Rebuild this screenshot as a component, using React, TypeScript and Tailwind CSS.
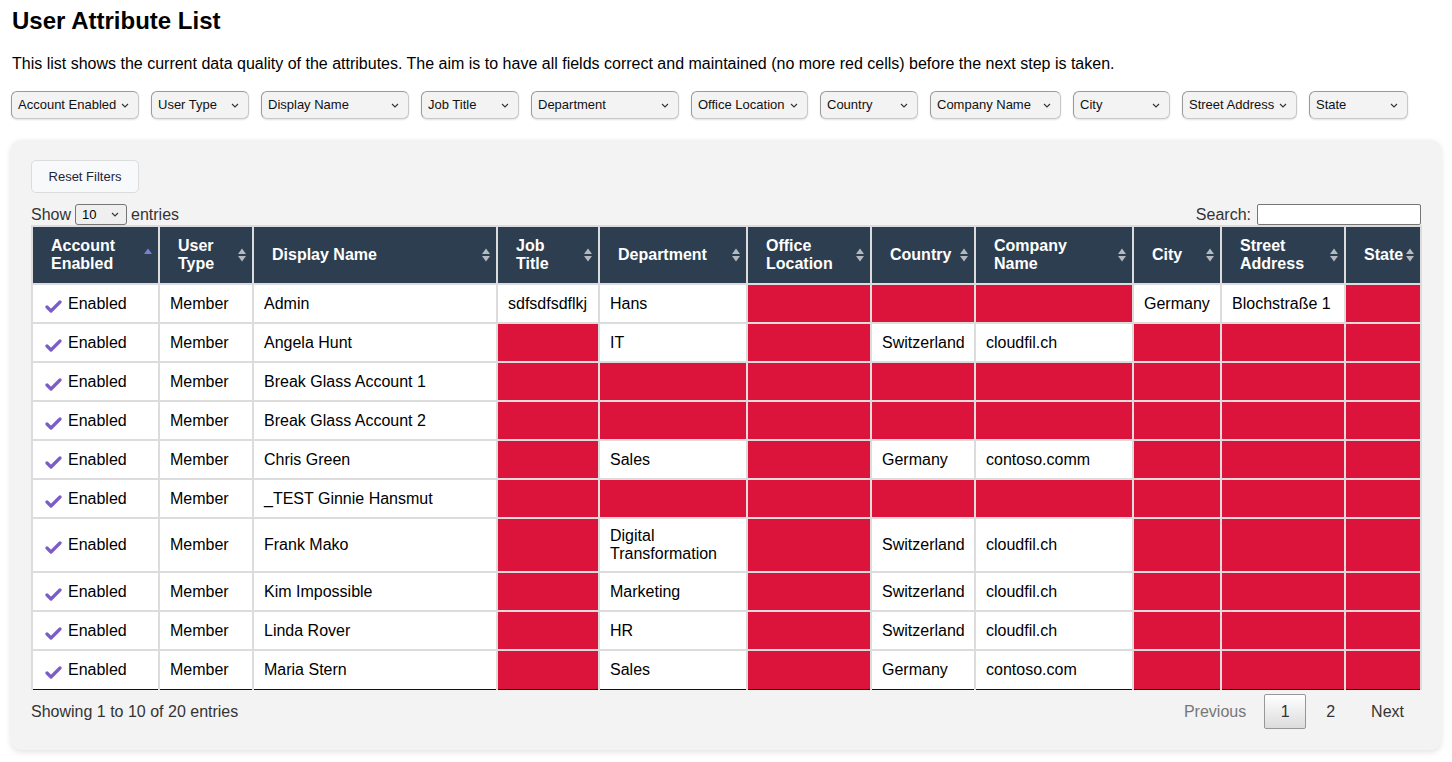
import React from "react";

const font = { fontFamily: '"Liberation Sans", Arial, sans-serif' };

const filters = [
    { label: "Account Enabled", w: "w-[128px]" },
    { label: "User Type", w: "w-[98px]" },
    { label: "Display Name", w: "w-[148px]" },
    { label: "Job Title", w: "w-[98px]" },
    { label: "Department", w: "w-[148px]" },
    { label: "Office Location", w: "w-[117px]" },
    { label: "Country", w: "w-[98px]" },
    { label: "Company Name", w: "w-[131px]" },
    { label: "City", w: "w-[97px]" },
    { label: "Street Address", w: "w-[115px]" },
    { label: "State", w: "w-[99px]" },
];

const columns = [
    { label: "Account Enabled", w: 127 },
    { label: "User Type", w: 94 },
    { label: "Display Name", w: 244 },
    { label: "Job Title", w: 102 },
    { label: "Department", w: 148 },
    { label: "Office Location", w: 124 },
    { label: "Country", w: 104 },
    { label: "Company Name", w: 158 },
    { label: "City", w: 88 },
    { label: "Street Address", w: 124 },
    { label: "State", w: 76 },
];

// null = missing value -> red cell
type Row = (string | null)[];
const rows: Row[] = [
    ["Admin", "sdfsdfsdflkj", "Hans", null, null, null, "Germany", "Blochstraße 1", null],
    ["Angela Hunt", null, "IT", null, "Switzerland", "cloudfil.ch", null, null, null],
    ["Break Glass Account 1", null, null, null, null, null, null, null, null],
    ["Break Glass Account 2", null, null, null, null, null, null, null, null],
    ["Chris Green", null, "Sales", null, "Germany", "contoso.comm", null, null, null],
    ["_TEST Ginnie Hansmut", null, null, null, null, null, null, null, null],
    ["Frank Mako", null, "Digital Transformation", null, "Switzerland", "cloudfil.ch", null, null, null],
    ["Kim Impossible", null, "Marketing", null, "Switzerland", "cloudfil.ch", null, null, null],
    ["Linda Rover", null, "HR", null, "Switzerland", "cloudfil.ch", null, null, null],
    ["Maria Stern", null, "Sales", null, "Germany", "contoso.com", null, null, null],
];

function Chevron() {
    return (
        <svg width="8" height="5" viewBox="0 0 8 5" className="shrink-0">
            <polyline points="1,1 4,4 7,1" fill="none" stroke="#333" strokeWidth="1.1" />
        </svg>
    );
}

function SortIcon({ active }: { active?: boolean }) {
    return (
        <svg width="10" height="16" viewBox="0 0 10 16" className="absolute right-[5px] top-1/2 -translate-y-1/2">
            {active ? (
                <polygon points="1,7 5,1.5 9,7" fill="#7b7fd8" />
            ) : (
                <>
                    <polygon points="1,7 5,1.5 9,7" fill="#b4b9c0" />
                    <polygon points="1,9 5,14.5 9,9" fill="#b4b9c0" />
                </>
            )}
        </svg>
    );
}

function CheckIcon() {
    return (
        <svg width="17" height="13" viewBox="0 0 17 13" className="shrink-0 mt-[5px]">
            <polyline
                points="2,7 6,11 15,2"
                fill="none"
                stroke="#7c5cc6"
                strokeWidth="3.2"
                strokeLinecap="round"
                strokeLinejoin="round"
            />
        </svg>
    );
}

export default function App() {
    const last = rows.length - 1;
    return (
        <div className="min-h-screen bg-white px-[11px] pt-[7px] text-black" style={font}>
            <h1 className="text-[24px] leading-[28px] font-bold pl-[1px]">User Attribute List</h1>
            <p className="mt-[20px] text-[16px] leading-[18px] pl-[1px]">
                This list shows the current data quality of the attributes. The aim is to have all fields correct and maintained (no more red cells) before the next step is taken.
            </p>

            {/* filter dropdowns */}
            <div className="mt-[18px] flex gap-[12px]">
                {filters.map((f) => (
                    <div
                        key={f.label}
                        className={`${f.w} shrink-0 h-[28px] flex items-center justify-between pl-[6px] pr-[9px] rounded-[6px] border border-[#9a9a9a] border-r-[#c8c8c8] border-b-[#c8c8c8] bg-[#f3f3f3] shadow-[0_1px_2px_rgba(0,0,0,0.12)] text-[13px] text-[#111]`}
                    >
                        <span className="whitespace-nowrap">{f.label}</span>
                        <Chevron />
                    </div>
                ))}
            </div>

            <div className="mt-[21px] w-[1430px] rounded-[10px] bg-[#f3f3f3] px-[20px] pt-[20px] pb-[18px] shadow-[0_2px_6px_rgba(0,0,0,0.12)]">
                <button className="h-[33px] w-[108px] rounded-[5px] border border-[#dcdcdc] bg-[#f8f9fb] text-[13px] text-[#1c2636]">
                    Reset Filters
                </button>

                <div className="mt-[11px] h-[21px] flex items-center justify-between text-[16px] text-[#333]">
                    <div className="flex items-center">
                        <span>Show</span>
                        <div className="mx-[4px] h-[21px] w-[52px] flex items-center justify-between pl-[6px] pr-[7px] rounded-[3px] border border-[#767676] bg-[#efefef] text-[13px] text-black">
                            <span>10</span>
                            <Chevron />
                        </div>
                        <span>entries</span>
                    </div>
                    <div className="flex items-center gap-[6px]">
                        <span>Search:</span>
                        <div className="h-[21px] w-[164px] rounded-[2px] border border-[#767676] bg-white" />
                    </div>
                </div>

                <table className="w-[1390px] table-fixed border-collapse text-[16px]">
                    <colgroup>
                        {columns.map((c) => (
                            <col key={c.label} style={{ width: c.w }} />
                        ))}
                    </colgroup>
                    <thead>
                        <tr className="bg-[#2d3e50] text-white">
                            {columns.map((c, i) => (
                                <th
                                    key={c.label}
                                    className="relative border-2 border-[#dcdcdc] border-b-[#111] border-b-[1px] pl-[18px] pr-[26px] py-[10px] text-left align-middle font-bold leading-[18px]"
                                >
                                    {c.label}
                                    <SortIcon active={i === 0} />
                                </th>
                            ))}
                        </tr>
                    </thead>
                    <tbody>
                        {rows.map((r, ri) => (
                            <tr key={ri} className="h-[39px]">
                                <td className={`border-2 border-[#dcdcdc] bg-white pl-[12px] pr-[8px] py-[8px] leading-[18px] ${ri === last ? "border-b-[#111] border-b-[1px]" : ""}`}>
                                    <div className="flex items-start gap-[6px]">
                                        <CheckIcon />
                                        <span>Enabled</span>
                                    </div>
                                </td>
                                <td className={`border-2 border-[#dcdcdc] bg-white px-[10px] py-[8px] leading-[18px] ${ri === last ? "border-b-[#111] border-b-[1px]" : ""}`}>
                                    Member
                                </td>
                                {r.map((v, ci) => (
                                    <td
                                        key={ci}
                                        className={`border-2 border-[#dcdcdc] px-[10px] py-[8px] leading-[18px] ${v === null ? "bg-[#dc143c]" : "bg-white"} ${ri === last ? "border-b-[#111] border-b-[1px]" : ""}`}
                                    >
                                        {v}
                                    </td>
                                ))}
                            </tr>
                        ))}
                    </tbody>
                </table>

                <div className="mt-[2px] flex items-center justify-between text-[16px]">
                    <span className="text-[#333]">Showing 1 to 10 of 20 entries</span>
                    <div className="flex items-center">
                        <span className="px-[16px] py-[8px] text-[#777]">Previous</span>
                        <span className="ml-[2px] h-[35px] w-[42px] flex items-center justify-center rounded-[2px] border border-[#979797] bg-gradient-to-b from-white to-[#dcdcdc] text-[#333]">
                            1
                        </span>
                        <span className="ml-[2px] px-[18px] py-[8px] text-[#333]">2</span>
                        <span className="ml-[2px] pl-[16px] pr-[17px] py-[8px] text-[#333]">Next</span>
                    </div>
                </div>
            </div>
        </div>
    );
}
